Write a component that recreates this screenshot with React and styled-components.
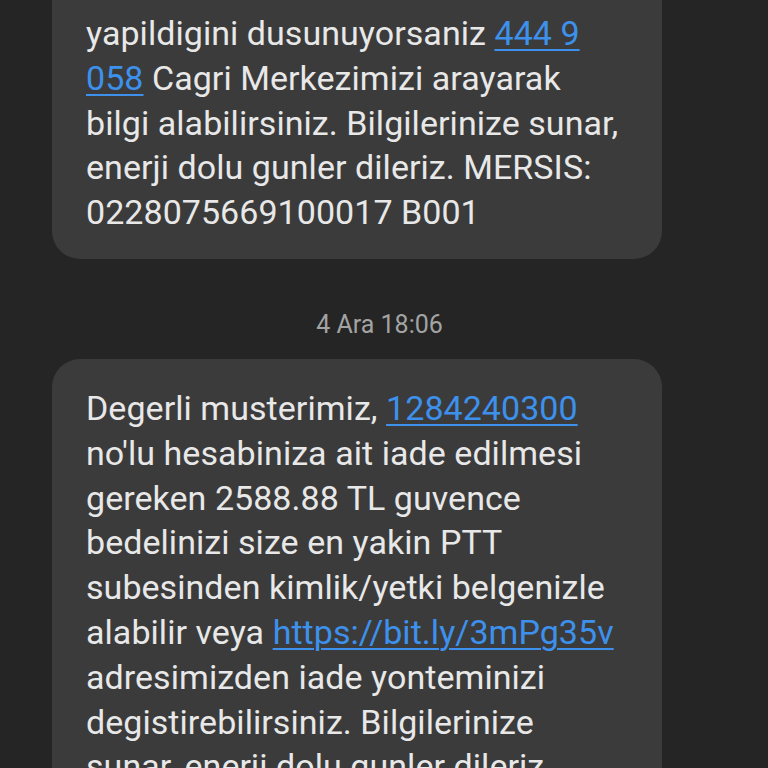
import React from 'react'
import styled, { createGlobalStyle } from 'styled-components'

const GlobalStyle = createGlobalStyle`
  html, body {
    margin: 0;
    padding: 0;
    background: #252525;
  }
  body {
    font-family: Roboto, "Noto Sans", "Liberation Sans", sans-serif;
  }
`

const Screen = styled.div`
  width: 768px;
  height: 768px;
  overflow: hidden;
  background: #252525;
`

// scrolled conversation: top bubble is partly off screen
const Thread = styled.div`
  display: flex;
  flex-direction: column;
  align-items: flex-start;
  margin-top: -40px;
  padding: 0 52px;
`

const Bubble = styled.div`
  box-sizing: border-box;
  width: 610px;
  background: #3b3b3b;
  border-radius: 28px;
  padding: ${p => p.$pad || '27px 30px 24px 34px'};
  color: #e8e8e8;
  font-size: 34px;
  line-height: 44.8px;
  letter-spacing: 0.05px;
`

const Link = styled.a`
  color: #3d91ec;
  text-decoration: underline;
  text-decoration-thickness: 2px;
  text-underline-offset: 4px;
`

const Stamp = styled.div`
  align-self: stretch;
  margin: 0 -52px;
  padding: 51px 9px 19px 0;
  text-align: center;
  color: #a3a3a3;
  font-size: 25px;
  line-height: 30px;
`

const App = () => {
  return (
    <Screen>
      <GlobalStyle />
      <Thread>
        <Bubble $pad="51px 30px 24px 34px">
          yapildigini dusunuyorsaniz <Link>444 9<br />058</Link> Cagri Merkezimizi arayarak<br />
          bilgi alabilirsiniz. Bilgilerinize sunar,<br />
          enerji dolu gunler dileriz. MERSIS:<br />
          0228075669100017 B001
        </Bubble>
        <Stamp>4 Ara 18:06</Stamp>
        <Bubble>
          Degerli musterimiz, <Link>1284240300</Link><br />
          no'lu hesabiniza ait iade edilmesi<br />
          gereken 2588.88 TL guvence<br />
          bedelinizi size en yakin PTT<br />
          subesinden kimlik/yetki belgenizle<br />
          alabilir veya <Link>https://bit.ly/3mPg35v</Link><br />
          adresimizden iade yonteminizi<br />
          degistirebilirsiniz. Bilgilerinize<br />
          sunar, enerji dolu gunler dileriz.
        </Bubble>
      </Thread>
    </Screen>
  )
}

export default App
